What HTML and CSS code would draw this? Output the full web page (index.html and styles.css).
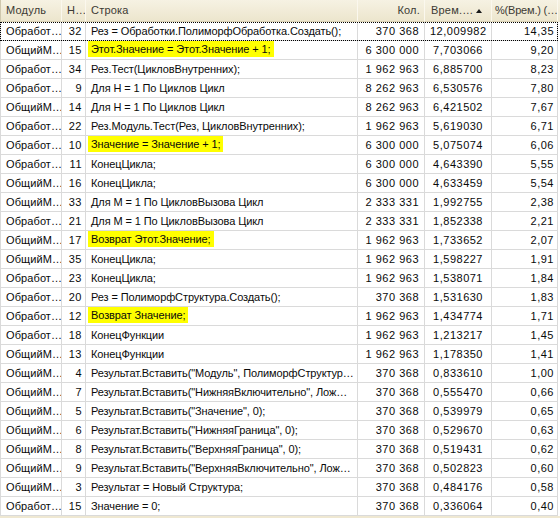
FILE: index.html
```html
<!DOCTYPE html>
<html lang="ru">
<head>
<meta charset="utf-8">
<link rel="stylesheet" href="styles.css">
</head>
<body>
<div class="grid">
  <div class="row head">
    <div class="c c1">Модуль</div>
    <div class="c c2">Н…</div>
    <div class="c c3">Строка</div>
    <div class="c c4 r">Кол.</div>
    <div class="c c5">Врем.…<span class="sort"></span></div>
    <div class="c c6">%(Врем.) (…</div>
  </div>
  <div class="body">
    <div class="row focus"><div class="c c1">Обработ…</div><div class="c c2 r">32</div><div class="c c3">Рез = Обработки.ПолиморфОбработка.Создать();</div><div class="c c4 r">370 368</div><div class="c c5 r">12,009982</div><div class="c c6 r">14,35</div></div>
    <div class="row"><div class="c c1">ОбщийМ…</div><div class="c c2 r">15</div><div class="c c3"><span class="hl">Этот.Значение = Этот.Значение + 1;</span></div><div class="c c4 r">6 300 000</div><div class="c c5 r">7,703066</div><div class="c c6 r">9,20</div></div>
    <div class="row"><div class="c c1">Обработ…</div><div class="c c2 r">34</div><div class="c c3">Рез.Тест(ЦикловВнутренних);</div><div class="c c4 r">1 962 963</div><div class="c c5 r">6,885700</div><div class="c c6 r">8,23</div></div>
    <div class="row"><div class="c c1">Обработ…</div><div class="c c2 r">9</div><div class="c c3">Для Н = 1 По Циклов Цикл</div><div class="c c4 r">8 262 963</div><div class="c c5 r">6,530576</div><div class="c c6 r">7,80</div></div>
    <div class="row"><div class="c c1">ОбщийМ…</div><div class="c c2 r">14</div><div class="c c3">Для Н = 1 По Циклов Цикл</div><div class="c c4 r">8 262 963</div><div class="c c5 r">6,421502</div><div class="c c6 r">7,67</div></div>
    <div class="row"><div class="c c1">Обработ…</div><div class="c c2 r">22</div><div class="c c3">Рез.Модуль.Тест(Рез, ЦикловВнутренних);</div><div class="c c4 r">1 962 963</div><div class="c c5 r">5,619030</div><div class="c c6 r">6,71</div></div>
    <div class="row"><div class="c c1">Обработ…</div><div class="c c2 r">10</div><div class="c c3"><span class="hl">Значение = Значение + 1;</span></div><div class="c c4 r">6 300 000</div><div class="c c5 r">5,075074</div><div class="c c6 r">6,06</div></div>
    <div class="row"><div class="c c1">Обработ…</div><div class="c c2 r">11</div><div class="c c3">КонецЦикла;</div><div class="c c4 r">6 300 000</div><div class="c c5 r">4,643390</div><div class="c c6 r">5,55</div></div>
    <div class="row"><div class="c c1">ОбщийМ…</div><div class="c c2 r">16</div><div class="c c3">КонецЦикла;</div><div class="c c4 r">6 300 000</div><div class="c c5 r">4,633459</div><div class="c c6 r">5,54</div></div>
    <div class="row"><div class="c c1">ОбщийМ…</div><div class="c c2 r">33</div><div class="c c3">Для М = 1 По ЦикловВызова Цикл</div><div class="c c4 r">2 333 331</div><div class="c c5 r">1,992755</div><div class="c c6 r">2,38</div></div>
    <div class="row"><div class="c c1">Обработ…</div><div class="c c2 r">21</div><div class="c c3">Для М = 1 По ЦикловВызова Цикл</div><div class="c c4 r">2 333 331</div><div class="c c5 r">1,852338</div><div class="c c6 r">2,21</div></div>
    <div class="row"><div class="c c1">ОбщийМ…</div><div class="c c2 r">17</div><div class="c c3"><span class="hl">Возврат Этот.Значение;</span></div><div class="c c4 r">1 962 963</div><div class="c c5 r">1,733652</div><div class="c c6 r">2,07</div></div>
    <div class="row"><div class="c c1">ОбщийМ…</div><div class="c c2 r">35</div><div class="c c3">КонецЦикла;</div><div class="c c4 r">1 962 963</div><div class="c c5 r">1,598227</div><div class="c c6 r">1,91</div></div>
    <div class="row"><div class="c c1">Обработ…</div><div class="c c2 r">23</div><div class="c c3">КонецЦикла;</div><div class="c c4 r">1 962 963</div><div class="c c5 r">1,538071</div><div class="c c6 r">1,84</div></div>
    <div class="row"><div class="c c1">Обработ…</div><div class="c c2 r">20</div><div class="c c3">Рез = ПолиморфСтруктура.Создать();</div><div class="c c4 r">370 368</div><div class="c c5 r">1,531630</div><div class="c c6 r">1,83</div></div>
    <div class="row"><div class="c c1">Обработ…</div><div class="c c2 r">12</div><div class="c c3"><span class="hl">Возврат Значение;</span></div><div class="c c4 r">1 962 963</div><div class="c c5 r">1,434774</div><div class="c c6 r">1,71</div></div>
    <div class="row"><div class="c c1">Обработ…</div><div class="c c2 r">18</div><div class="c c3">КонецФункции</div><div class="c c4 r">1 962 963</div><div class="c c5 r">1,213217</div><div class="c c6 r">1,45</div></div>
    <div class="row"><div class="c c1">ОбщийМ…</div><div class="c c2 r">13</div><div class="c c3">КонецФункции</div><div class="c c4 r">1 962 963</div><div class="c c5 r">1,178350</div><div class="c c6 r">1,41</div></div>
    <div class="row"><div class="c c1">ОбщийМ…</div><div class="c c2 r">4</div><div class="c c3">Результат.Вставить("Модуль", ПолиморфСтруктур…</div><div class="c c4 r">370 368</div><div class="c c5 r">0,833610</div><div class="c c6 r">1,00</div></div>
    <div class="row"><div class="c c1">ОбщийМ…</div><div class="c c2 r">7</div><div class="c c3">Результат.Вставить("НижняяВключительно", Лож…</div><div class="c c4 r">370 368</div><div class="c c5 r">0,555470</div><div class="c c6 r">0,66</div></div>
    <div class="row"><div class="c c1">ОбщийМ…</div><div class="c c2 r">5</div><div class="c c3">Результат.Вставить("Значение", 0);</div><div class="c c4 r">370 368</div><div class="c c5 r">0,539979</div><div class="c c6 r">0,65</div></div>
    <div class="row"><div class="c c1">ОбщийМ…</div><div class="c c2 r">6</div><div class="c c3">Результат.Вставить("НижняяГраница", 0);</div><div class="c c4 r">370 368</div><div class="c c5 r">0,529670</div><div class="c c6 r">0,63</div></div>
    <div class="row"><div class="c c1">ОбщийМ…</div><div class="c c2 r">8</div><div class="c c3">Результат.Вставить("ВерхняяГраница", 0);</div><div class="c c4 r">370 368</div><div class="c c5 r">0,519431</div><div class="c c6 r">0,62</div></div>
    <div class="row"><div class="c c1">ОбщийМ…</div><div class="c c2 r">9</div><div class="c c3">Результат.Вставить("ВерхняяВключительно", Лож…</div><div class="c c4 r">370 368</div><div class="c c5 r">0,502823</div><div class="c c6 r">0,60</div></div>
    <div class="row"><div class="c c1">ОбщийМ…</div><div class="c c2 r">3</div><div class="c c3">Результат = Новый Структура;</div><div class="c c4 r">370 368</div><div class="c c5 r">0,484176</div><div class="c c6 r">0,58</div></div>
    <div class="row"><div class="c c1">Обработ…</div><div class="c c2 r">15</div><div class="c c3">Значение = 0;</div><div class="c c4 r">370 368</div><div class="c c5 r">0,336064</div><div class="c c6 r">0,40</div></div>
  </div>
  <div class="foot"></div>
</div>
</body>
</html>
```

FILE: styles.css
```css
html, body {
  margin: 0;
  padding: 0;
  background: #ffffff;
}
body {
  font-family: "Liberation Sans", Arial, sans-serif;
  font-size: 11px;
  color: #0a0a0a;
  width: 560px;
  height: 518px;
  overflow: hidden;
}
.grid {
  width: 560px;
}
.row {
  display: grid;
  grid-template-columns: 62px 24px 272px 67px 67px 66px;
  height: 19px;
  position: relative;
}
.c {
  box-sizing: border-box;
  border-right: 1px solid #dadada;
  border-bottom: 1px solid #dadada;
  padding: 0 4px 0 5px;
  white-space: nowrap;
  overflow: hidden;
  line-height: 18px;
}
.c1 {
  border-left: 1px solid #dadada;
  padding-left: 5px;
  padding-right: 0;
  letter-spacing: 0.1px;
}
.r {
  text-align: right;
  letter-spacing: 0.5px;
}
.body .c2 {
  padding-right: 3px;
}
.body .c3 {
  padding-left: 5px;
  letter-spacing: -0.1px;
}
.body .c4 {
  padding-right: 5px;
}
.body .c5 {
  padding-right: 8px;
}
.body .c6 {
  padding-right: 3px;
}
.head {
  height: 22px;
  background: linear-gradient(#f6f2e3, #ece5cc);
}
.head .c {
  position: relative;
  line-height: 21px;
  color: #3c3a34;
  border-right: 1px solid #fbf8ee;
  border-bottom: 1px solid #d8cfb2;
  padding-left: 5px;
  letter-spacing: 0.2px;
}
.head .c1 {
  border-left: 1px solid #cfc7ad;
}
.head .c4 {
  padding-right: 4px;
}
.head .c5 {
  padding-left: 6px;
}
.head .c6 {
  padding-left: 3px;
  padding-right: 0;
  letter-spacing: -0.2px;
}
.sort {
  position: absolute;
  right: 9px;
  top: 9px;
  width: 0;
  height: 0;
  border-left: 3px solid transparent;
  border-right: 3px solid transparent;
  border-bottom: 4px solid #1a1a1a;
}
.focus::after {
  content: "";
  position: absolute;
  left: 0;
  top: 0;
  width: 558px;
  height: 19px;
  box-sizing: border-box;
  border: 1px dotted #000;
  pointer-events: none;
}
.hl {
  display: inline-block;
  background: #ffff00;
  line-height: 16px;
  padding: 0 3px;
  margin-left: -3px;
  vertical-align: 1px;
}
.foot {
  height: 2px;
  background: #efe8d2;
}
```
